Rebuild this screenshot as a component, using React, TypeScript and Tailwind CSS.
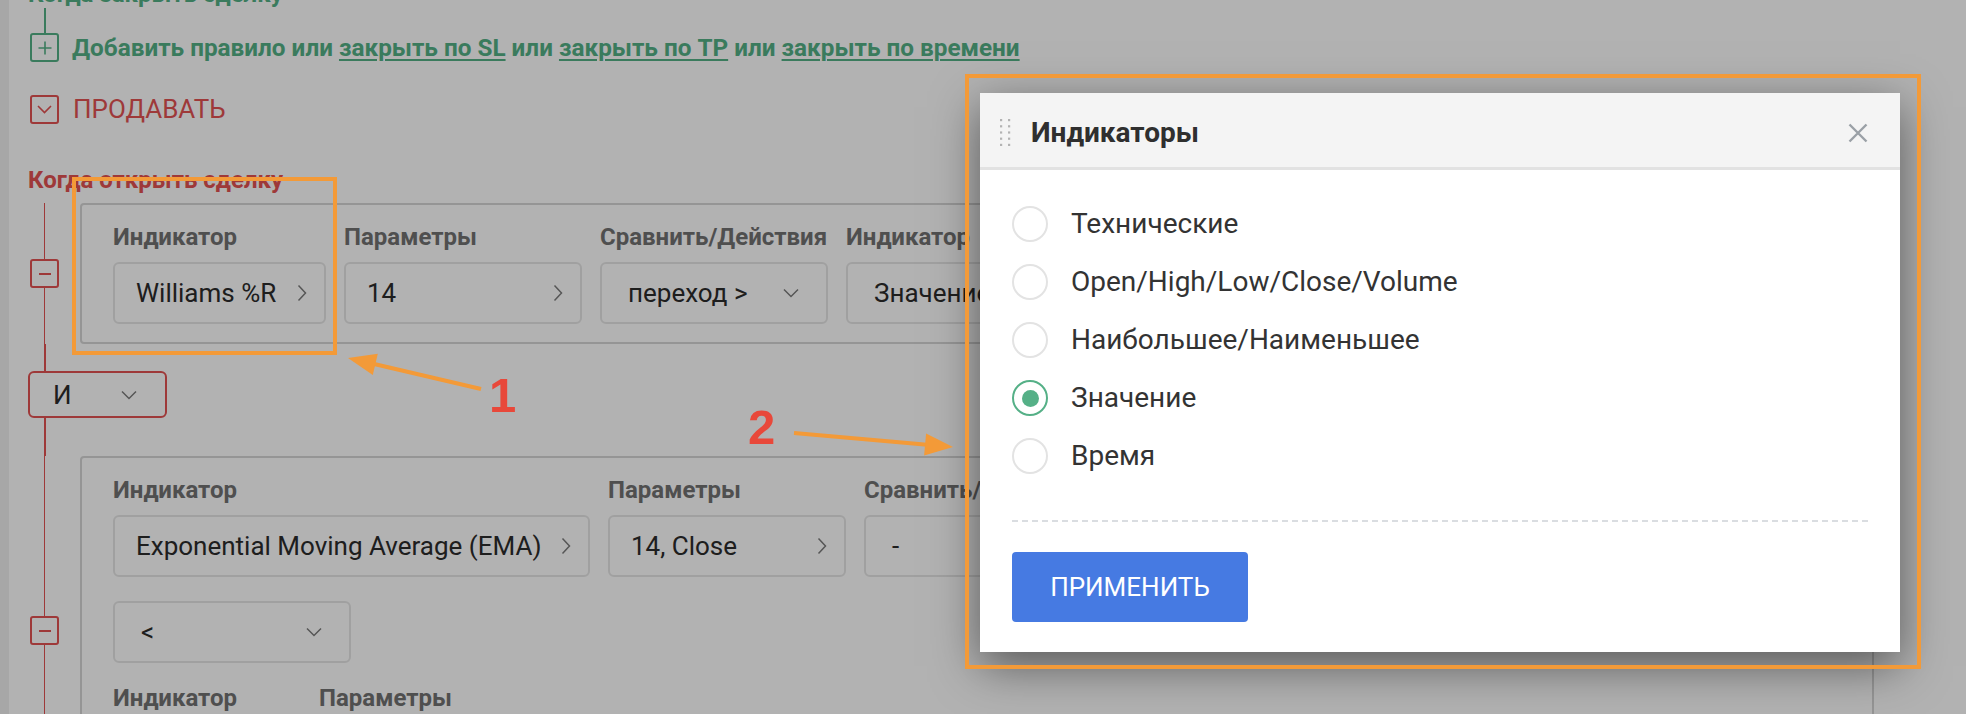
import React from "react";

function ChevronRight() {
  return (
    <svg width="10" height="18" viewBox="0 0 10 18" className="shrink-0">
      <polyline points="1.5,1.5 8.5,9 1.5,16.5" fill="none" stroke="#7c7c7c" strokeWidth="1.5" />
    </svg>
  );
}

function ChevronDown() {
  return (
    <svg width="16" height="10" viewBox="0 0 16 10" className="shrink-0">
      <polyline points="1,1.5 8,8.5 15,1.5" fill="none" stroke="#7c7c7c" strokeWidth="1.5" />
    </svg>
  );
}

function Field({ text, w, kind }: { text: string; w: string; kind: "arrow" | "select" }) {
  const pad = kind === "arrow" ? "pl-[21px] pr-[17px]" : "pl-[26px] pr-[27px]";
  return (
    <div
      className={`flex h-[62px] shrink-0 items-center justify-between overflow-hidden rounded-[6px] border-2 border-[#e6e6e6] bg-white ${pad} ${w}`}
    >
      <span className="whitespace-nowrap text-[26px] leading-[30px] text-[#2b2b2b]">{text}</span>
      {kind === "arrow" ? <ChevronRight /> : <ChevronDown />}
    </div>
  );
}

function Col({ label, children, w }: { label: string; children: React.ReactNode; w: string }) {
  return (
    <div className={`flex shrink-0 flex-col gap-[11px] ${w}`}>
      <div className="whitespace-nowrap text-[24px] font-bold leading-[28px] text-[#727272]">{label}</div>
      {children}
    </div>
  );
}

function MinusBox() {
  return (
    <div className="flex h-[29px] w-[29px] shrink-0 items-center justify-center rounded-[3px] border-2 border-[#e35252] bg-white">
      <div className="h-[2px] w-[12px] bg-[#e35252]" />
    </div>
  );
}

function Rail() {
  return (
    <div className="ml-[2px] flex w-[29px] shrink-0 flex-col items-center">
      <div className="w-[1.5px] flex-1 bg-[#e35252]" />
      <MinusBox />
      <div className="w-[1.5px] flex-1 bg-[#e35252]" />
    </div>
  );
}

function Radio({ checked }: { checked?: boolean }) {
  return checked ? (
    <div className="flex h-[36px] w-[36px] shrink-0 items-center justify-center rounded-full border-2 border-[#55b087]">
      <div className="h-[17px] w-[17px] rounded-full bg-[#55b087]" />
    </div>
  ) : (
    <div className="h-[36px] w-[36px] shrink-0 rounded-full border-2 border-[#e3e3e3]" />
  );
}

export default function App() {
  const options = [
    { t: "Технические" },
    { t: "Open/High/Low/Close/Volume" },
    { t: "Наибольшее/Наименьшее" },
    { t: "Значение", c: true },
    { t: "Время" },
  ];
  const dots: React.ReactNode[] = [];
  for (let r = 0; r < 5; r++) {
    for (let c = 0; c < 2; c++) {
      dots.push(<rect key={`${r}-${c}`} x={c * 8} y={r * 6.2} width="2.2" height="2.2" fill="#b3b3b3" />);
    }
  }
  return (
    <div className="relative h-[714px] w-full overflow-hidden bg-white font-['Roboto',sans-serif]">
      {/* page */}
      <div className="flex h-full">
        <div className="w-[9px] shrink-0 bg-[#f0f0f0]" />
        <div className="flex shrink-0 flex-col self-start pl-[19px]">
          <div className="-mt-[20px] h-[28px] shrink-0 whitespace-nowrap text-[24px] font-bold leading-[28px] text-[#54b186]">
            Когда закрыть сделку
          </div>
          <div className="ml-[16px] h-[25px] w-[1.5px] shrink-0 bg-[#54b186]" />
          <div className="flex shrink-0 items-center gap-[13px]">
            <div className="ml-[2px] flex h-[29px] w-[29px] shrink-0 items-center justify-center rounded-[3px] border-2 border-[#54b186]">
              <svg width="14" height="14" viewBox="0 0 14 14">
                <path d="M7 0.5V13.5M0.5 7H13.5" stroke="#54b186" strokeWidth="1.6" />
              </svg>
            </div>
            <div className="whitespace-nowrap text-[24.3px] font-bold leading-[28px] text-[#54b186]">
              Добавить правило или{" "}
              <span className="underline decoration-2 underline-offset-[3px]">закрыть по SL</span> или{" "}
              <span className="underline decoration-2 underline-offset-[3px]">закрыть по TP</span> или{" "}
              <span className="underline decoration-2 underline-offset-[3px]">закрыть по времени</span>
            </div>
          </div>
          <div className="mt-[32px] flex shrink-0 items-center gap-[14px]">
            <div className="ml-[2px] flex h-[29px] w-[29px] shrink-0 items-center justify-center rounded-[3px] border-2 border-[#e35252]">
              <svg width="15" height="9" viewBox="0 0 15 9">
                <polyline points="1,1 7.5,7.5 14,1" fill="none" stroke="#e35252" strokeWidth="1.6" />
              </svg>
            </div>
            <div className="whitespace-nowrap text-[26px] leading-[30px] text-[#e35252]">ПРОДАВАТЬ</div>
          </div>
          <div className="mt-[42px] h-[28px] shrink-0 whitespace-nowrap text-[24px] font-bold leading-[28px] text-[#e35252]">
            Когда открыть сделку
          </div>

          {/* rule 1 */}
          <div className="mt-[9px] flex shrink-0">
            <Rail />
            <div className="ml-[21px] w-[1794px] rounded-[4px] border-2 border-[#d6d6d6] px-[31px] pb-[18px] pt-[18px]">
              <div className="flex gap-[18px]">
                <Col label="Индикатор" w="w-[213px]">
                  <Field text="Williams %R" w="w-[213px]" kind="arrow" />
                </Col>
                <Col label="Параметры" w="w-[238px]">
                  <Field text="14" w="w-[238px]" kind="arrow" />
                </Col>
                <Col label="Сравнить/Действия" w="w-[228px]">
                  <Field text="переход >" w="w-[228px]" kind="select" />
                </Col>
                <Col label="Индикатор" w="w-[220px]">
                  <Field text="Значение" w="w-[220px]" kind="select" />
                </Col>
              </div>
            </div>
          </div>
          <div className="ml-[16px] h-[27px] w-[1.5px] shrink-0 bg-[#e35252]" />
          <div className="flex h-[47px] w-[139px] shrink-0 items-center justify-between rounded-[6px] border-2 border-[#e35252] bg-white pl-[23px] pr-[28px]">
            <span className="text-[26px] leading-[30px] text-[#2b2b2b]">И</span>
            <ChevronDown />
          </div>
          <div className="ml-[16px] h-[38px] w-[1.5px] shrink-0 bg-[#e35252]" />

          {/* rule 2 */}
          <div className="flex shrink-0">
            <Rail />
            <div className="ml-[21px] w-[1794px] rounded-[4px] border-2 border-[#d6d6d6] px-[31px] pb-[18px] pt-[18px]">
              <div className="flex gap-[18px]">
                <Col label="Индикатор" w="w-[477px]">
                  <Field text="Exponential Moving Average (EMA)" w="w-[477px]" kind="arrow" />
                </Col>
                <Col label="Параметры" w="w-[238px]">
                  <Field text="14, Close" w="w-[238px]" kind="arrow" />
                </Col>
                <Col label="Сравнить/Действия" w="w-[220px]">
                  <Field text="-" w="w-[220px]" kind="select" />
                </Col>
              </div>
              <div className="mt-[24px]">
                <Field text="<" w="w-[238px]" kind="select" />
              </div>
              <div className="mt-[21px] flex gap-[18px]">
                <Col label="Индикатор" w="w-[188px]">
                  <Field text="Значение" w="w-[188px]" kind="arrow" />
                </Col>
                <Col label="Параметры" w="w-[238px]">
                  <Field text="0" w="w-[238px]" kind="arrow" />
                </Col>
              </div>
            </div>
          </div>
        </div>
      </div>

      {/* dim overlay */}
      <div className="absolute inset-0 bg-black/30" />

      {/* modal */}
      <div className="absolute left-[980px] top-[93px] w-[920px] bg-white shadow-[0_14px_44px_rgba(0,0,0,0.5)]">
        <div className="flex h-[77px] items-center border-b-[3px] border-[#e2e2e2] bg-[#f4f4f4] pl-[20px] pr-[32px] pt-[5px]">
          <svg width="11" height="28" viewBox="0 0 11 28" className="shrink-0">
            {dots}
          </svg>
          <div className="ml-[20px] whitespace-nowrap text-[28px] font-bold leading-[32px] text-[#2f2f2f]">Индикаторы</div>
          <svg width="20" height="20" viewBox="0 0 20 20" className="ml-auto shrink-0">
            <path d="M1.5 1.5L18.5 18.5M18.5 1.5L1.5 18.5" stroke="#9aa0a6" strokeWidth="2.4" />
          </svg>
        </div>
        <div className="px-[32px] pb-[30px] pt-[25px]">
          {options.map((o) => (
            <div key={o.t} className="flex h-[58px] items-center gap-[23px]">
              <Radio checked={o.c} />
              <span className="whitespace-nowrap text-[28px] leading-[34px] text-[#333333]">{o.t}</span>
            </div>
          ))}
          <div className="mt-[35px] border-t-2 border-dashed border-[#dadde1]" />
          <button className="mt-[30px] flex h-[70px] w-[236px] items-center justify-center rounded-[4px] bg-[#467ae2] text-[26px] text-white">
            ПРИМЕНИТЬ
          </button>
        </div>
      </div>

      {/* annotations */}
      <div className="absolute left-[965px] top-[74px] h-[595px] w-[956px] border-4 border-[#f39a38]" />
      <div className="absolute left-[72px] top-[177px] h-[178px] w-[265px] border-4 border-[#f39a38]" />
      <svg className="pointer-events-none absolute left-0 top-0" width="1966" height="714" viewBox="0 0 1966 714">
        <line x1="481" y1="389" x2="372" y2="363.5" stroke="#f39a38" strokeWidth="4" />
        <polygon points="348,358 372.8,375.1 377.8,353.7" fill="#f39a38" />
        <line x1="794" y1="433" x2="930" y2="445" stroke="#f39a38" strokeWidth="4" />
        <polygon points="953,447 926.1,433.6 924.1,455.5" fill="#f39a38" />
      </svg>
      <div className="absolute left-[489px] top-[371px] font-['Liberation_Sans',Arial,sans-serif] text-[49px] font-bold leading-none text-[#e8483a]">
        1
      </div>
      <div className="absolute left-[748px] top-[403px] font-['Liberation_Sans',Arial,sans-serif] text-[49px] font-bold leading-none text-[#e8483a]">
        2
      </div>
    </div>
  );
}
